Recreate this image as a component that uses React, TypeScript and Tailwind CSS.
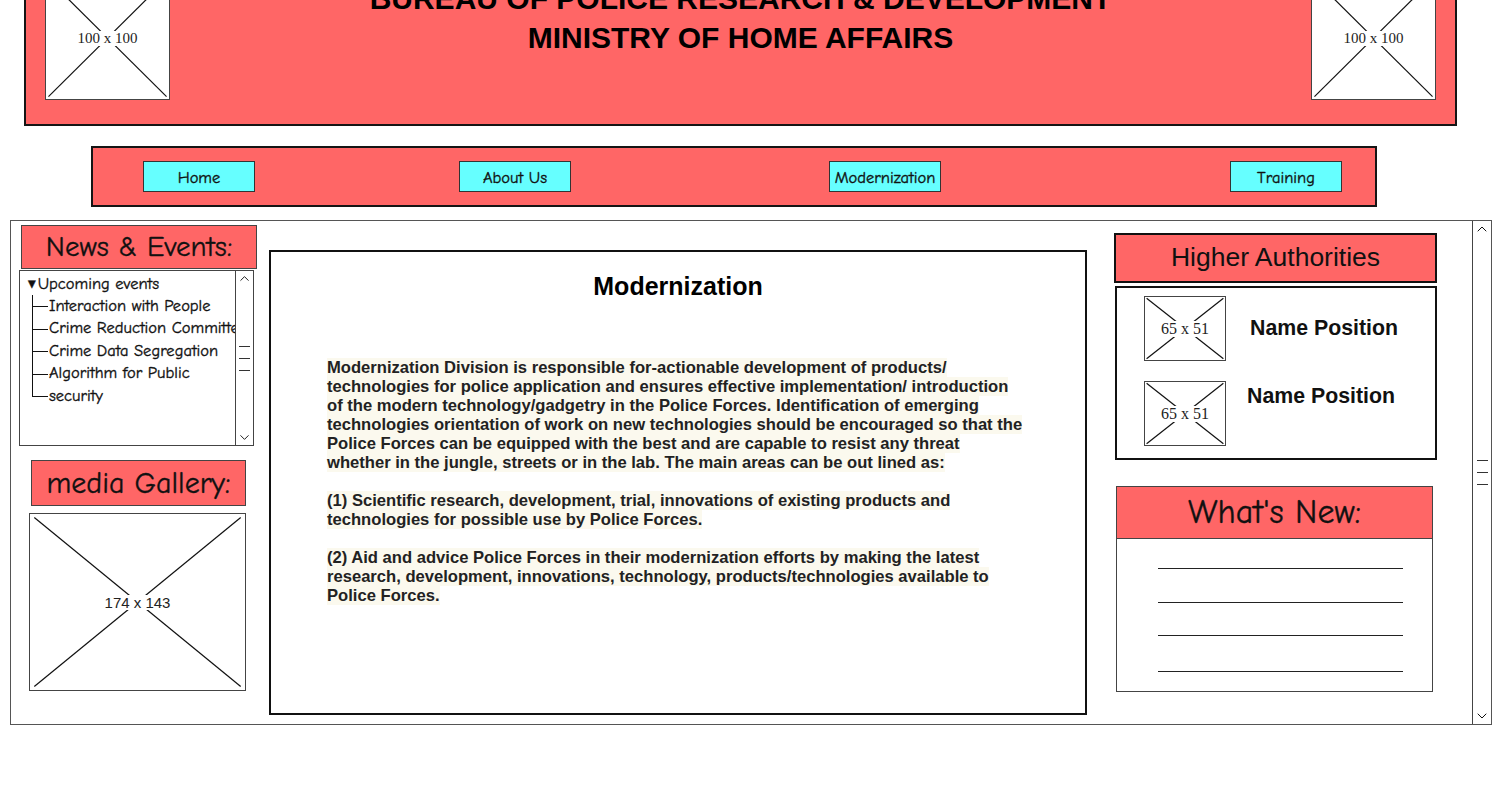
import { ChevronDown, ChevronUp } from 'lucide-react'

const comic = "font-['Comic_Sans_MS','Comic_Neue','DejaVu_Sans',sans-serif] [-webkit-text-stroke:0.35px_#111]"
const arial = "font-['Liberation_Sans',Arial,sans-serif]"

function Placeholder({ className, label, labelClass }: { className: string; label: string; labelClass: string }) {
  return (
    <div className={`relative border border-[#444] bg-white ${className}`}>
      <svg className="absolute inset-0 h-full w-full" aria-hidden="true">
        <line x1="2%" y1="2%" x2="98%" y2="98%" stroke="#111" strokeWidth="1.2" />
        <line x1="98%" y1="2%" x2="2%" y2="98%" stroke="#111" strokeWidth="1.2" />
      </svg>
      <div className="absolute inset-0 flex items-center justify-center">
        <span className={`bg-white px-[3px] leading-none text-[#222] ${labelClass}`}>{label}</span>
      </div>
    </div>
  )
}

function Scrollbar({ className, arrow }: { className: string; arrow: number }) {
  return (
    <div className={`flex flex-col items-center justify-between ${className}`}>
      <ChevronUp size={arrow} strokeWidth={1.5} className="text-[#111]" />
      <div className="flex w-[11px] flex-col gap-[11px]">
        <div className="h-px bg-[#333]" />
        <div className="h-px bg-[#333]" />
        <div className="h-px bg-[#333]" />
      </div>
      <ChevronDown size={arrow} strokeWidth={1.5} className="text-[#111]" />
    </div>
  )
}

const navItems = [
  { label: 'Home', gap: 'ml-[50px]' },
  { label: 'About Us', gap: 'ml-[204px]' },
  { label: 'Modernization', gap: 'ml-[258px]' },
  { label: 'Training', gap: 'ml-[289px]' },
]

const events = ['Interaction with People', 'Crime Reduction Committee', 'Crime Data Segregation', 'Algorithm for Public', 'security']

const paragraph = [
  'Modernization Division is responsible for-actionable development of products/',
  'technologies for police application and ensures effective implementation/ introduction',
  'of the modern technology/gadgetry in the Police Forces. Identification of emerging',
  'technologies orientation of work on new technologies should be encouraged so that the',
  'Police Forces can be equipped with the best and are capable to resist any threat',
  'whether in the jungle, streets or in the lab. The main areas can be out lined as:',
  '',
  '(1) Scientific research, development, trial, innovations of existing products and',
  'technologies for possible use by Police Forces.',
  '',
  '(2) Aid and advice Police Forces in their modernization efforts by making the latest',
  'research, development, innovations, technology, products/technologies available to',
  'Police Forces.',
]

export default function App() {
  return (
    <div className="h-[800px] w-[1500px] overflow-hidden bg-white">
      {/* header */}
      <header className="ml-[24px] mt-[-44px] flex w-[1433px] items-start border-2 border-[#151515] bg-[#ff6666] px-[19px] pb-[24px] pt-[18px]">
        <Placeholder className="h-[124px] w-[125px] shrink-0" label="100 x 100" labelClass="font-['Liberation_Serif',serif] text-[15px]" />
        <div className={`mt-[3px] flex-1 text-center text-[30px] font-bold leading-[39px] text-black ${arial}`}>
          <div>BUREAU OF POLICE RESEARCH &amp; DEVELOPMENT</div>
          <div>MINISTRY OF HOME AFFAIRS</div>
        </div>
        <Placeholder className="h-[124px] w-[125px] shrink-0" label="100 x 100" labelClass="font-['Liberation_Serif',serif] text-[15px]" />
      </header>

      {/* nav */}
      <nav className="ml-[91px] mt-[20px] flex h-[61px] w-[1286px] items-start border-2 border-[#151515] bg-[#ff6666] pt-[13px]">
        {navItems.map((item) => (
          <button
            key={item.label}
            className={`${item.gap} flex h-[31px] w-[112px] items-center justify-center border border-[#333] bg-[#66ffff] pt-[3px] text-[16.5px] text-[#111] ${comic}`}
          >
            {item.label}
          </button>
        ))}
      </nav>

      {/* main */}
      <main className="ml-[10px] mt-[13px] flex h-[505px] w-[1482px] border border-[#555]">
        {/* left column */}
        <aside className="flex w-[258px] shrink-0 flex-col items-start">
          <div className={`ml-[10px] mt-[4px] flex h-[44px] w-[236px] items-center justify-center border border-[#444] bg-[#ff6666] text-[29px] text-[#111] ${comic}`}>
            News &amp; Events:
          </div>
          <div className="ml-[8px] mt-px flex h-[176px] w-[235px] border border-[#444]">
            <div className={`flex-1 overflow-hidden whitespace-nowrap pl-[8px] pt-[2px] text-[16.5px] text-[#111] ${comic}`}>
              <div className="flex h-[22px] items-center">
                <span className="mr-[2px] text-[10px]">▼</span>
                Upcoming events
              </div>
              {events.map((ev, i) => (
                <div key={ev} className="flex h-[22.5px] items-center">
                  <div className="relative ml-[4px] h-full w-[17px] shrink-0">
                    <div className={`absolute left-0 top-0 w-px bg-[#111] ${i === events.length - 1 ? 'h-1/2' : 'h-full'}`} />
                    <div className="absolute left-0 top-1/2 h-px w-[16px] bg-[#111]" />
                  </div>
                  <span>{ev}</span>
                </div>
              ))}
            </div>
            <Scrollbar className="w-[18px] border-l border-[#444]" arrow={15} />
          </div>
          <div className={`ml-[20px] mt-[14px] flex h-[46px] w-[215px] items-center justify-center border border-[#444] bg-[#ff6666] text-[30px] text-[#111] ${comic}`}>
            media Gallery:
          </div>
          <Placeholder className="ml-[18px] mt-[7px] h-[178px] w-[217px]" label="174 x 143" labelClass={`${arial} text-[15px]`} />
        </aside>

        {/* center content */}
        <section className={`mt-[29px] h-[465px] w-[818px] shrink-0 border-2 border-[#111] ${arial}`}>
          <h1 className="pt-[20px] text-center text-[25px] font-bold leading-[28px] text-black">Modernization</h1>
          <p className="mt-[58px] pl-[56px] text-[16.6px] font-bold leading-[19px] text-[#222]">
            {paragraph.map((line, i) => (
              <span key={i}>
                {line && <span className="bg-[#fbf9ee]">{line}</span>}
                <br />
              </span>
            ))}
          </p>
        </section>

        {/* right column */}
        <aside className="ml-[27px] flex w-[323px] shrink-0 flex-col items-start">
          <div className={`mt-[12px] flex h-[50px] w-[323px] items-center justify-center border-2 border-[#111] bg-[#ff6666] text-[26.5px] text-[#111] ${arial}`}>
            Higher Authorities
          </div>
          <div className={`ml-px mt-[3px] h-[174px] w-[322px] border-2 border-[#111] ${arial}`}>
            <div className="ml-[27px] mt-[8px] flex items-center">
              <Placeholder className="h-[65px] w-[82px]" label="65 x 51" labelClass="font-['Liberation_Serif',serif] text-[16px]" />
              <span className="ml-[24px] text-[21.3px] font-bold text-[#111]">Name Position</span>
            </div>
            <div className="ml-[27px] mt-[20px] flex items-start">
              <Placeholder className="h-[65px] w-[82px]" label="65 x 51" labelClass="font-['Liberation_Serif',serif] text-[16px]" />
              <span className="ml-[21px] mt-[2px] text-[21.3px] font-bold leading-[26px] text-[#111]">Name Position</span>
            </div>
          </div>
          <div className="ml-[2px] mt-[26px] h-[206px] w-[317px] border border-[#444]">
            <div className={`flex h-[52px] items-center justify-center border-b border-[#444] bg-[#ff6666] text-[34px] text-[#111] ${comic}`}>
              What&apos;s New:
            </div>
            <div className="ml-[41px] flex w-[245px] flex-col">
              <div className="mt-[29px] h-px bg-[#222]" />
              <div className="mt-[33px] h-px bg-[#222]" />
              <div className="mt-[32px] h-px bg-[#222]" />
              <div className="mt-[35px] h-px bg-[#222]" />
            </div>
          </div>
        </aside>

        <Scrollbar className="ml-auto w-[19px] border-l border-[#444]" arrow={16} />
      </main>
    </div>
  )
}
